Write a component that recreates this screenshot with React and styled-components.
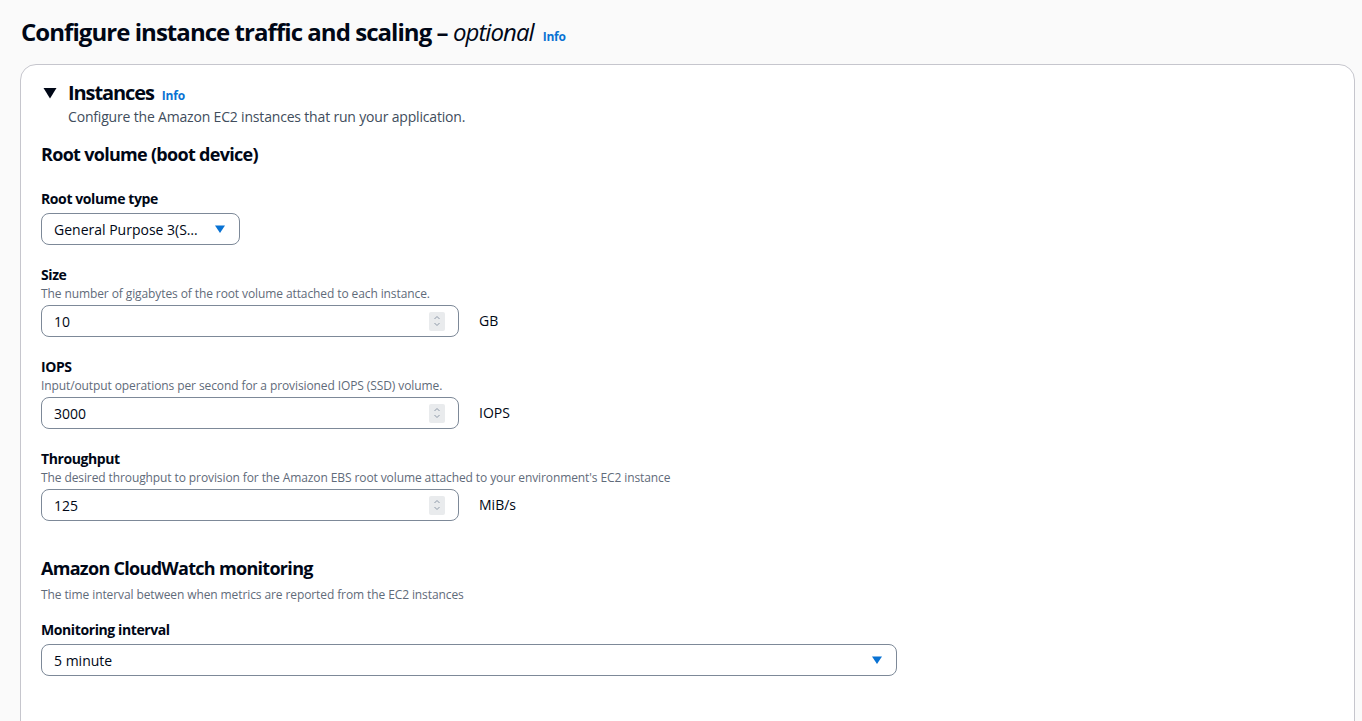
import React from "react";
import styled, { createGlobalStyle } from "styled-components";

const GlobalStyle = createGlobalStyle`
	html, body {
		margin: 0;
		padding: 0;
		background: #fafafa;
		font-family: "Open Sans", "Noto Sans", sans-serif;
		color: #000716;
	}
`;

const Page = styled.div`
	padding: 16px 7px 0 20px;
	height: 721px;
	box-sizing: border-box;
	overflow: hidden;
`;

const Title = styled.h1`
	display: flex;
	align-items: baseline;
	gap: 9px;
	margin: 0 0 16px 1px;
	font-size: 24px;
	line-height: 32px;
	font-weight: 700;
	letter-spacing: -0.95px;

	em {
		font-weight: 400;
		font-style: italic;
	}
`;

const Info = styled.a`
	color: #0972d3;
	font-size: 12px;
	line-height: 1;
	font-weight: 700;
	text-decoration: none;
	letter-spacing: -0.2px;
`;

const Card = styled.section`
	background: #fff;
	border: 1px solid #c6c6cd;
	border-radius: 16px;
	padding: 16px 20px 60px 20px;
	min-height: 700px;
`;

const Header = styled.div`
	display: flex;
	gap: 11px;
	margin-bottom: 14px;
`;

const Caret = styled.svg`
	width: 14px;
	height: 14px;
	margin-top: 5px;
	margin-left: 2px;
`;

const HeadText = styled.div`
	display: flex;
	flex-direction: column;
`;

const HeadTitle = styled.div`
	display: flex;
	align-items: baseline;
	gap: 8px;
	font-size: 20px;
	line-height: 24px;
	font-weight: 700;
	letter-spacing: -1.1px;
`;

const HeadDesc = styled.div`
	font-size: 14px;
	line-height: 22px;
	color: #414d5c;
	margin-top: 1px;
	letter-spacing: -0.18px;
`;

const SectionTitle = styled.h2`
	margin: 0 0 ${(p) => p.$mb || 22}px 0;
	font-size: 18px;
	line-height: 24px;
	font-weight: 700;
	letter-spacing: -0.7px;
`;

const Field = styled.div`
	margin-bottom: 19px;
`;

const Label = styled.div`
	font-size: 14px;
	line-height: 22px;
	font-weight: 700;
	letter-spacing: -0.4px;
	margin-bottom: ${(p) => (p.$tight ? 0 : 3)}px;
`;

const Desc = styled.div`
	font-size: 12px;
	line-height: 16px;
	color: #5f6b7a;
	letter-spacing: -0.1px;
	margin-bottom: ${(p) => p.$mb || 3}px;
`;

const Row = styled.div`
	display: flex;
	align-items: center;
	gap: 20px;
`;

const Select = styled.div`
	display: flex;
	align-items: center;
	justify-content: space-between;
	box-sizing: border-box;
	width: ${(p) => p.$width}px;
	height: 32px;
	border: 1px solid #7d8998;
	border-radius: 8px;
	padding: 0 13px 0 12px;
	font-size: 14px;
	background: #fff;
`;

const Input = styled.div`
	display: flex;
	align-items: center;
	justify-content: space-between;
	box-sizing: border-box;
	width: 418px;
	height: 32px;
	border: 1px solid #7d8998;
	border-radius: 8px;
	padding: 0 13px 0 12px;
	font-size: 14px;
	background: #fff;
`;

const Spinner = styled.div`
	display: flex;
	align-items: center;
	justify-content: center;
	width: 16px;
	height: 19px;
	background: #e9ebed;
	border-radius: 2px;
`;

const Unit = styled.span`
	font-size: 14px;
	margin-top: -2px;
`;

const Spacer = styled.div`
	height: ${(p) => p.$h}px;
`;

const DownArrow = () => (
	<svg width="12" height="12" viewBox="0 0 12 12">
		<path d="M1 2.5h10L6 10z" fill="#0972d3" />
	</svg>
);

const Spin = () => (
	<Spinner>
		<svg width="10" height="14" viewBox="0 0 10 14">
			<path d="M2.5 5l2.5-2.5L7.5 5M2.5 9l2.5 2.5L7.5 9" fill="none" stroke="#8d99a8" strokeWidth="1" />
		</svg>
	</Spinner>
);

const NumberField = ({ label, desc, value, unit }) => (
	<Field>
		<Label $tight>{label}</Label>
		<Desc>{desc}</Desc>
		<Row>
			<Input>
				<span>{value}</span>
				<Spin />
			</Input>
			<Unit>{unit}</Unit>
		</Row>
	</Field>
);

const App = () => {
	return (
		<>
			<GlobalStyle />
			<Page>
				<Title>
					<span>
						Configure instance traffic and scaling – <em>optional</em>
					</span>
					<Info>Info</Info>
				</Title>
				<Card>
					<Header>
						<Caret viewBox="0 0 14 14">
							<path d="M0.5 2h13L7 12.5z" fill="#000716" />
						</Caret>
						<HeadText>
							<HeadTitle>
								Instances <Info>Info</Info>
							</HeadTitle>
							<HeadDesc>Configure the Amazon EC2 instances that run your application.</HeadDesc>
						</HeadText>
					</Header>

					<SectionTitle>Root volume (boot device)</SectionTitle>

					<Field>
						<Label>Root volume type</Label>
						<Select $width={199}>
							<span>General Purpose 3(S…</span>
							<DownArrow />
						</Select>
					</Field>

					<NumberField
						label="Size"
						desc="The number of gigabytes of the root volume attached to each instance."
						value="10"
						unit="GB"
					/>
					<NumberField
						label="IOPS"
						desc="Input/output operations per second for a provisioned IOPS (SSD) volume."
						value="3000"
						unit="IOPS"
					/>
					<NumberField
						label="Throughput"
						desc="The desired throughput to provision for the Amazon EBS root volume attached to your environment's EC2 instance"
						value="125"
						unit="MiB/s"
					/>

					<Spacer $h={16} />
					<SectionTitle $mb={7}>Amazon CloudWatch monitoring</SectionTitle>
					<Desc $mb={16}>The time interval between when metrics are reported from the EC2 instances</Desc>

					<Field>
						<Label>Monitoring interval</Label>
						<Select $width={856}>
							<span>5 minute</span>
							<DownArrow />
						</Select>
					</Field>
				</Card>
			</Page>
		</>
	);
};

export default App;
